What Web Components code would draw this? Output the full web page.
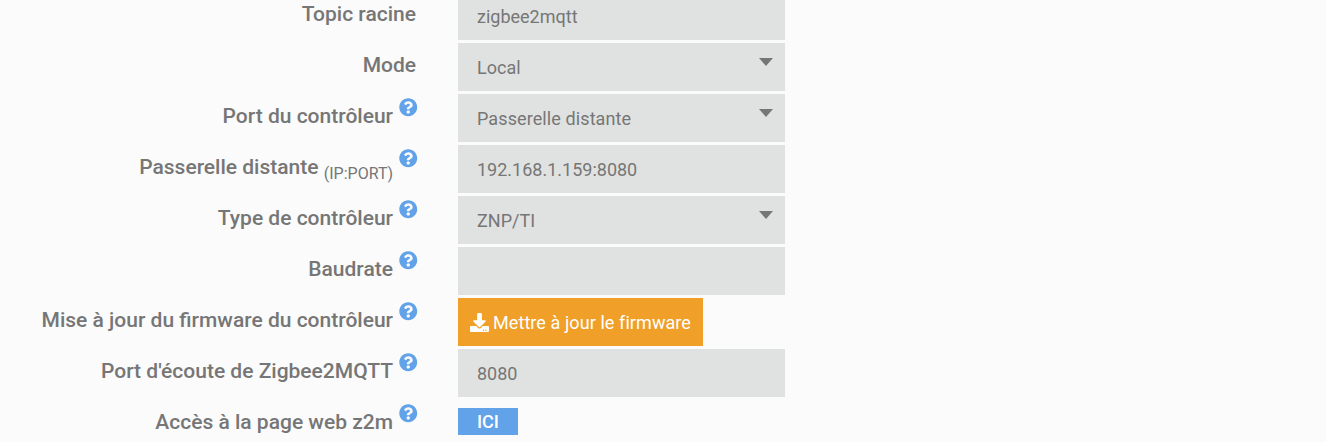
<!DOCTYPE html>
<html lang="fr">
<head>
<meta charset="utf-8">
<title>Zigbee2MQTT</title>
<style>
  html, body { margin: 0; background: #fbfbfb; height: 442px; overflow: hidden; }
  body { font-family: Roboto, "Liberation Sans", sans-serif; color: #767676; }
  small { font-size: 16px; font-weight: 400; vertical-align: sub; line-height: 0; }
</style>
</head>
<body>
<cfg-form>
  <cfg-row label="Topic racine"><cfg-field>zigbee2mqtt</cfg-field></cfg-row>
  <cfg-row label="Mode"><cfg-field select>Local</cfg-field></cfg-row>
  <cfg-row label="Port du contrôleur" help><cfg-field select style="letter-spacing: .1px">Passerelle distante</cfg-field></cfg-row>
  <cfg-row help><span slot="label">Passerelle distante <small>(IP:PORT)</small></span><cfg-field>192.168.1.159:8080</cfg-field></cfg-row>
  <cfg-row label="Type de contrôleur" help><cfg-field select>ZNP/TI</cfg-field></cfg-row>
  <cfg-row label="Baudrate" help><cfg-field></cfg-field></cfg-row>
  <cfg-row label="Mise à jour du firmware du contrôleur" help><cfg-button icon="download">Mettre à jour le firmware</cfg-button></cfg-row>
  <cfg-row label="Port d'écoute de Zigbee2MQTT" help><cfg-field>8080</cfg-field></cfg-row>
  <cfg-row label="Accès à la page web z2m" help><cfg-badge>ICI</cfg-badge></cfg-row>
</cfg-form>

<script>
const ICONS = {
  help: "M504 256c0 136.997-111.043 248-248 248S8 392.997 8 256C8 119.083 119.043 8 256 8s248 111.083 248 248zM262.655 90c-54.497 0-89.255 22.957-116.549 63.758-3.536 5.286-2.353 12.415 2.715 16.258l34.699 26.31c5.205 3.947 12.621 3.008 16.665-2.122 17.864-22.658 30.113-35.797 57.303-35.797 20.429 0 45.698 13.148 45.698 32.958 0 14.976-12.363 22.667-32.534 33.976C247.128 238.528 216 254.941 216 296v4c0 6.627 5.373 12 12 12h56c6.627 0 12-5.373 12-12v-1.333c0-28.462 83.186-29.647 83.186-106.667 0-58.002-60.165-102-116.531-102zM256 338c-25.365 0-46 20.635-46 46 0 25.364 20.635 46 46 46s46-20.636 46-46c0-25.365-20.635-46-46-46z",
  download: "M216 0h80c13.3 0 24 10.7 24 24v168h87.7c17.8 0 26.7 21.5 14.1 34.1L269.7 378.3c-7.5 7.5-19.8 7.5-27.3 0L90.1 226.1c-12.6-12.6-3.7-34.1 14.1-34.1H192V24c0-13.3 10.7-24 24-24zm296 376v112c0 13.3-10.7 24-24 24H24c-13.3 0-24-10.7-24-24V376c0-13.3 10.7-24 24-24h146.7l49 49c20.1 20.1 52.5 20.1 72.6 0l49-49H488c13.3 0 24 10.7 24 24zm-124 88c0-11-9-20-20-20s-20 9-20 20 9 20 20 20 20-9 20-20zm64 0c0-11-9-20-20-20s-20 9-20 20 9 20 20 20 20-9 20-20z"
};

function svgIcon(name, size, color) {
  return `<svg xmlns="http://www.w3.org/2000/svg" viewBox="0 0 512 512" width="${size}" height="${size}" fill="${color}"><path d="${ICONS[name]}"/></svg>`;
}

class CfgForm extends HTMLElement {
  constructor() {
    super();
    this.attachShadow({ mode: "open" });
    this.shadowRoot.innerHTML = `
      <style>
        :host { display: flex; flex-direction: column; gap: 3px; margin-top: -8px; }
      </style>
      <slot></slot>
    `;
  }
}

class CfgRow extends HTMLElement {
  constructor() {
    super();
    this.attachShadow({ mode: "open" });
  }

  connectedCallback() {
    const label = this.getAttribute("label") || "";
    const help = this.hasAttribute("help");
    this.shadowRoot.innerHTML = `
      <style>
        :host {
          display: grid;
          grid-template-columns: 416px 327px;
          column-gap: 42px;
          height: 48px;
        }
        .label {
          display: flex;
          justify-content: flex-end;
          align-items: flex-start;
          padding-top: 10px;
          font-size: 21px;
          font-weight: 500;
          line-height: 24px;
          white-space: pre;
        }
        .help {
          margin-left: 6px;
          margin-right: -1.5px;
          height: 18.5px;
          margin-top: -6px;
        }
        .help svg { display: block; }
      </style>
      <div class="label">
        <slot name="label">${label}</slot>
        ${help ? `<span class="help">${svgIcon("help", 18.5, "#62a2e9")}</span>` : ""}
      </div>
      <div class="value"><slot></slot></div>
    `;
  }
}

class CfgField extends HTMLElement {
  constructor() {
    super();
    this.attachShadow({ mode: "open" });
  }

  connectedCallback() {
    const select = this.hasAttribute("select");
    this.shadowRoot.innerHTML = `
      <style>
        :host {
          display: flex;
          align-items: center;
          justify-content: space-between;
          height: 48px;
          box-sizing: border-box;
          padding: 0 11px 0 19px;
          background: #e0e2e1;
          font-size: 18px;
          color: #767676;
        }
        .arrow {
          width: 0;
          height: 0;
          margin: 0 1px 10px 0;
          border-left: 7.5px solid transparent;
          border-right: 7.5px solid transparent;
          border-top: 8px solid #767676;
        }
      </style>
      <span><slot></slot></span>
      ${select ? `<span class="arrow"></span>` : ""}
    `;
  }
}

class CfgButton extends HTMLElement {
  constructor() {
    super();
    this.attachShadow({ mode: "open" });
  }

  connectedCallback() {
    this.shadowRoot.innerHTML = `
      <style>
        :host {
          display: inline-flex;
          align-items: center;
          gap: 4px;
          height: 48px;
          box-sizing: border-box;
          padding: 0 12px;
          background: #f0a029;
          color: #fff;
          font-size: 18px;
          letter-spacing: .08px;
        }
        svg { display: block; }
      </style>
      ${svgIcon(this.getAttribute("icon"), 19, "#fff")}
      <span><slot></slot></span>
    `;
  }
}

class CfgBadge extends HTMLElement {
  constructor() {
    super();
    this.attachShadow({ mode: "open" });
    this.shadowRoot.innerHTML = `
      <style>
        :host {
          display: flex;
          align-items: center;
          justify-content: center;
          width: 60px;
          height: 27px;
          margin-top: 8px;
          background: #62a2e9;
          color: #fff;
          font-size: 18px;
          font-weight: 500;
        }
      </style>
      <slot></slot>
    `;
  }
}

customElements.define("cfg-form", CfgForm);
customElements.define("cfg-row", CfgRow);
customElements.define("cfg-field", CfgField);
customElements.define("cfg-button", CfgButton);
customElements.define("cfg-badge", CfgBadge);
</script>
</body>
</html>
